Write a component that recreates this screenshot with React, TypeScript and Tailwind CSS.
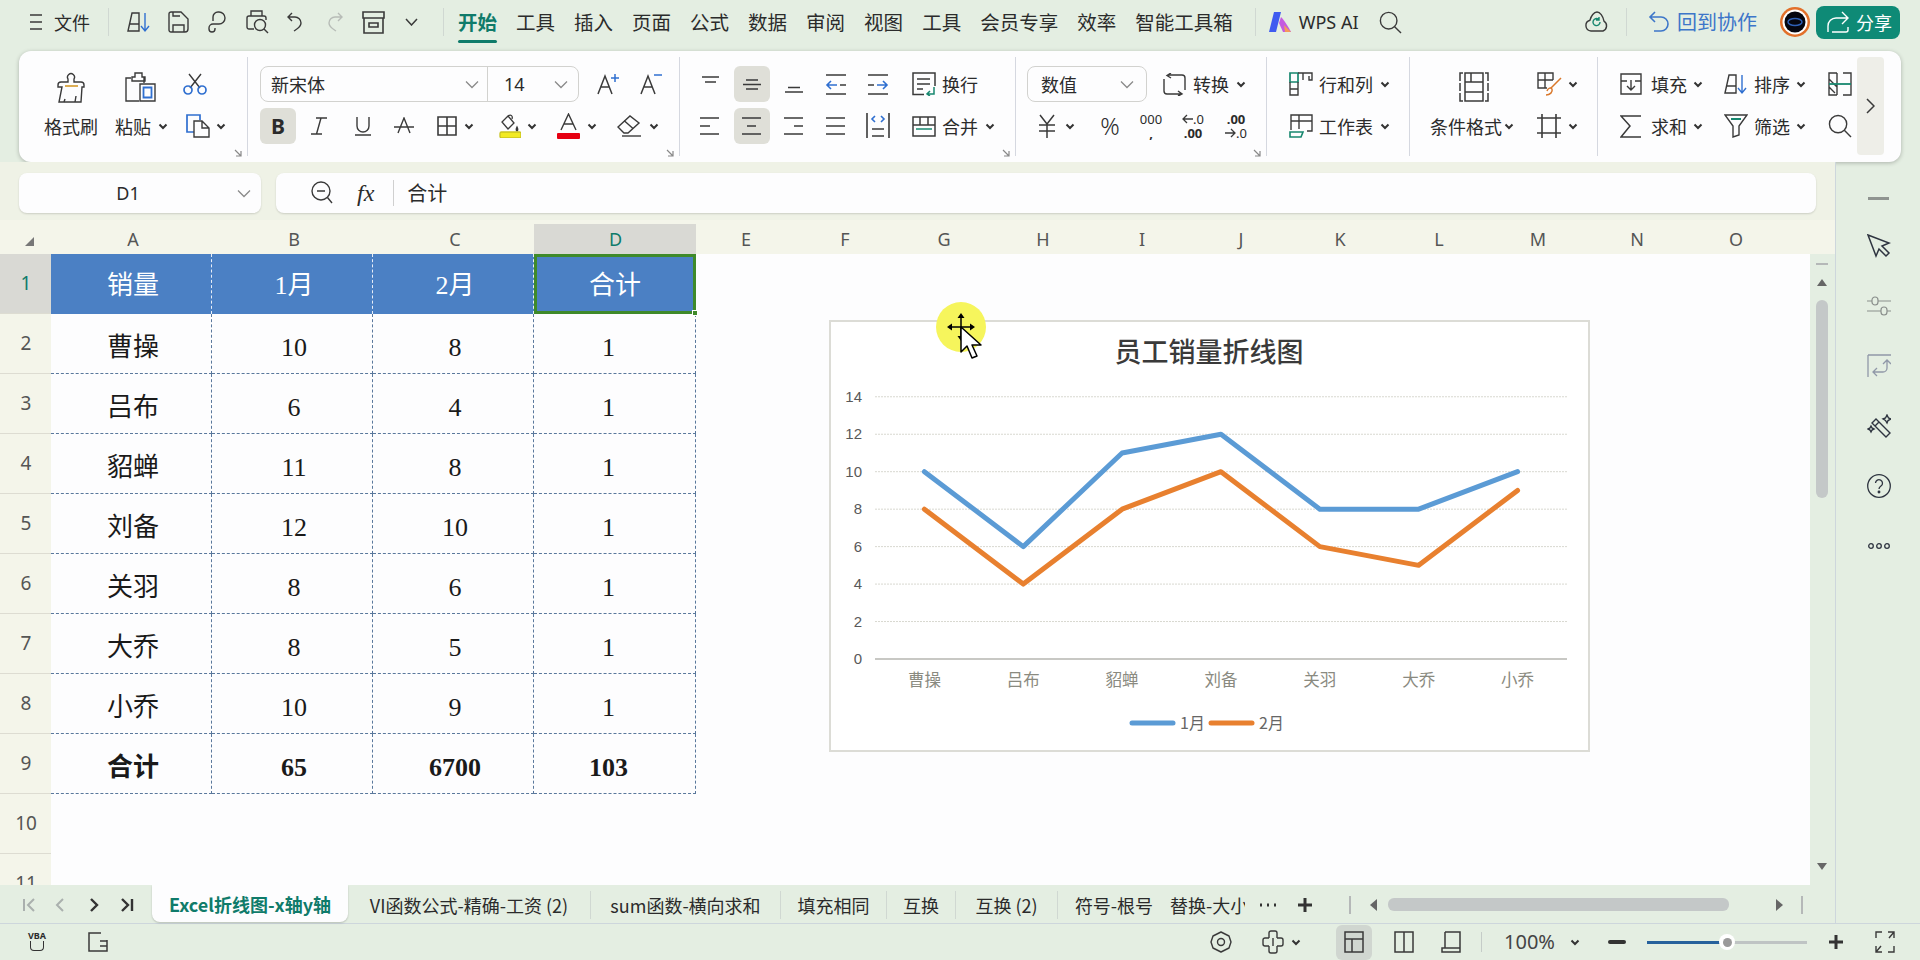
import React from 'react';

const INK = '#3a3a3a';
const BLUE = '#2f6fd0';
const GREEN = '#17876f';

type IconProps = { w: number; h: number; stroke?: string; sw?: number; children: React.ReactNode };

function Ico({ w, h, stroke = INK, sw = 1.4, children }: IconProps) {
  return (
    <svg width={w} height={h} viewBox={`0 0 ${w} ${h}`} fill="none" stroke={stroke} strokeWidth={sw} className="shrink-0 block">
      {children}
    </svg>
  );
}

function Chev() {
  return (
    <Ico w={10} h={7} sw={2} stroke="#333">
      <path d="M1.5 1.5 5 5l3.5-3.5" />
    </Ico>
  );
}

function ThinChev() {
  return (
    <Ico w={14} h={9} stroke="#8a8a8a" sw={1.3}>
      <path d="M1 1.5 7 7.5l6-6" />
    </Ico>
  );
}

function Launcher() {
  return (
    <div className="flex justify-end pr-[5px] mt-[5px] h-[8px]">
      <Ico w={8} h={8} stroke="#888" sw={1.2}>
        <path d="M1 1l6 6M7 2v5H2" />
      </Ico>
    </div>
  );
}

/* ---------- quick access icons ---------- */
const SortIcon = () => (
  <Ico w={24} h={22}>
    <path d="M1 20 5 2h7v18zM3 13h9" />
    <path d="M18 2v18M14 15l4 5 4-5" stroke={BLUE} />
  </Ico>
);
const SaveIcon = () => (
  <Ico w={21} h={22}>
    <path d="M1 3a2 2 0 0 1 2-2h10l7 7v10a3 3 0 0 1-3 3H3a2 2 0 0 1-2-2zM5 1v4h7M5 21v-7h11v7" />
  </Ico>
);
const PIcon = () => (
  <Ico w={20} h={22}>
    <path d="M6 10V6a5 5 0 0 1 5-5h1a6 6 0 0 1 0 12H6a4 4 0 0 0-4 4v1a3 3 0 0 0 6 0v-1" />
  </Ico>
);
const PreviewIcon = () => (
  <Ico w={23} h={24}>
    <path d="M5 6V1h11v5M8 19H3a2 2 0 0 1-2-2V8a2 2 0 0 1 2-2h15a2 2 0 0 1 2 2v2" />
    <circle cx="14" cy="15" r="5.5" />
    <path d="M18 19l4 4" />
  </Ico>
);
const UndoIcon = () => (
  <Ico w={16} h={20}>
    <path d="M5 1 1 5l4 4M1 5h7a6 6 0 0 1 6 6c0 4-4 6-7 8" />
  </Ico>
);
const RedoIcon = () => (
  <Ico w={16} h={20} stroke="#b7bcb7">
    <path d="M11 1l4 4-4 4M15 5H8a6 6 0 0 0-6 6c0 4 4 6 7 8" />
  </Ico>
);
const ArchiveIcon = () => (
  <Ico w={23} h={23} sw={1.6}>
    <path d="M1 1h21v6H1zM2 7v15h19V7M7 12h9v4H7z" />
  </Ico>
);
const SearchIcon = ({ s = 22 }: { s?: number }) => (
  <Ico w={s} h={s}>
    <circle cx={s * 0.42} cy={s * 0.42} r={s * 0.36} />
    <path d={`M${s * 0.68} ${s * 0.68}L${s - 1} ${s - 1}`} />
  </Ico>
);
const WpsLogo = () => (
  <svg width="24" height="22" viewBox="0 0 24 22" className="shrink-0 block">
    <path d="M5 1h7L7 21H0z" fill="#3f5bf0" />
    <path d="M10 12 12 6c3 3 7 9 10 15h-8z" fill="#c45ae0" />
    <path d="M15 14l7 7h-6z" fill="#f59a5a" />
  </svg>
);
const CloudIcon = () => (
  <Ico w={26} h={24}>
    <path d="M7 21a5.5 5.5 0 0 1-1-10.8C7 6 10 2 13 2s6 4 7 9.2A5.5 5.5 0 0 1 19 21z" />
    <path d="M16 12a3.5 3.5 0 1 1-1.5-2.8M15 7v3h-3" stroke={GREEN} />
  </Ico>
);
const BackIcon = () => (
  <Ico w={22} h={22} stroke="#3d76c9" sw={1.6}>
    <path d="M7 1 2 6l5 5M2 6h11a7 7 0 0 1 0 14H6" />
  </Ico>
);
const Avatar = () => (
  <svg width="30" height="30" viewBox="0 0 30 30" className="shrink-0 block">
    <circle cx="15" cy="15" r="15" fill="#e2702a" />
    <circle cx="15" cy="15" r="12.5" fill="#fff" />
    <circle cx="15" cy="15" r="10.5" fill="#05060f" />
    <ellipse cx="15" cy="15" rx="7" ry="3.5" fill="none" stroke="#2e5fb5" strokeWidth="1.5" />
  </svg>
);
const ShareIcon = () => (
  <Ico w={22} h={22} stroke="#fff" sw={1.4}>
    <path d="M1 21v-6a8 8 0 0 1 8-8h11M15 1l6 6-6 6M5 21h14a2 2 0 0 0 2-2v-3" />
  </Ico>
);

/* ---------- ribbon icons ---------- */
const BrushIcon = () => (
  <Ico w={30} h={31}>
    <path d="M12 10V7a3.5 3.5 0 1 1 6 0v3h7c2 0 3 1 3 3v2h-2l-1 15H3l3-15H2v-2c0-2 1-3 3-3z" />
    <path d="M9 14h13" stroke="#d9a441" strokeWidth="1.8" />
    <path d="M19 30l1-6M8 30l1-3" />
  </Ico>
);
const PasteIcon = () => (
  <Ico w={31} h={30}>
    <path d="M6 6H1v23h13M20 6h-1V11M7 9V5h3V1h7v4h3v4z" />
    <path d="M15 12h15v17H15z" />
    <path d="M18.5 15.5h8v10h-8z" stroke={BLUE} strokeWidth="1.8" />
  </Ico>
);
const ScissorsIcon = () => (
  <Ico w={24} h={22}>
    <path d="M6 1l11 14M18 1 7 15" />
    <circle cx="5" cy="17" r="4" stroke={BLUE} strokeWidth="1.7" />
    <circle cx="19" cy="17" r="4" stroke={BLUE} strokeWidth="1.7" />
  </Ico>
);
const CopyIcon = () => (
  <Ico w={24} h={24}>
    <path d="M8 18H1V1h13v5" stroke={BLUE} strokeWidth="1.7" />
    <path d="M8 7h8l7 7v9H8zM16 7v7h7" />
  </Ico>
);
const SmallA = ({ plus }: { plus: boolean }) => (
  <Ico w={22} h={24} sw={1.5}>
    <path d="M1 22 8 4l7 18M4 15h8" />
    <path d={plus ? 'M14 6h8M18 2v8' : 'M14 3h8'} stroke={BLUE} strokeWidth="1.5" />
  </Ico>
);
const ItalicIcon = () => (
  <Ico w={18} h={18}>
    <path d="M6 1h11M1 17h11M11 1 6.5 17" />
  </Ico>
);
const UnderlineIcon = () => (
  <Ico w={16} h={20}>
    <path d="M2 1v9a6 6 0 0 0 12 0V1M0 19h16" />
  </Ico>
);
const StrikeIcon = () => (
  <Ico w={20} h={18}>
    <path d="M4 16 10 1l6 15M0 10h20" />
  </Ico>
);
const BorderIcon = () => (
  <Ico w={20} h={20} sw={1.6}>
    <path d="M1 1h18v18H1zM1 10h18M10 1v18" />
  </Ico>
);
const FillIcon = () => (
  <svg width="22" height="24" viewBox="0 0 22 24" fill="none" stroke={INK} strokeWidth="1.3" className="shrink-0 block">
    <path d="M9 2 3 8l6 7 6-6zM9 2c3-2 5 0 4 3" />
    <path d="M18 13c1 2 1.5 3 0 4-1.500-1-1-2 0-4z" />
    <rect x="1" y="18" width="21" height="6" rx="1.5" fill="#f2ea23" stroke="#c9c421" />
  </svg>
);
const ColorAIcon = () => (
  <svg width="23" height="26" viewBox="0 0 23 26" fill="none" stroke={INK} strokeWidth="1.4" className="shrink-0 block">
    <path d="M4 17 11.5 1 19 17M7 11h9" />
    <rect x="0" y="20" width="23" height="6" rx="1" fill="#e60012" stroke="none" />
  </svg>
);
const EraserIcon = () => (
  <Ico w={24} h={22}>
    <path d="M1 12 13 1l9 7-11 10H7zM7 5.5l9 8" />
    <path d="M5 21h19" />
  </Ico>
);

/* alignment: drawn on the 36px button box */
const Lines = ({ d, extra }: { d: string; extra?: React.ReactNode }) => (
  <Ico w={36} h={36} sw={1.6}>
    <path d={d} />
    {extra}
  </Ico>
);

const WrapIcon = () => (
  <Ico w={24} h={24} sw={1.5}>
    <path d="M12 22.5H1V1h22v13M5 7h13M5 12h13M5 17h6" />
    <path d="M22 15v7h-7M18 19l-3 3 3 2" stroke={GREEN} />
  </Ico>
);
const MergeIcon = () => (
  <Ico w={24} h={21} sw={1.5}>
    <path d="M1 1h22v19H1zM1 9h22M8 1v8M16 1v8" />
    <path d="M4 13h16" stroke={GREEN} />
  </Ico>
);
const ConvertIcon = () => (
  <Ico w={23} h={23}>
    <path d="M22 17V5a3 3 0 0 0-3-3H5M8 0 4 2.5 8 5" />
    <path d="M1 6v12a3 3 0 0 0 3 3h15M15 18l4 3-4 2" />
  </Ico>
);
const YenIcon = () => (
  <Ico w={18} h={24} sw={1.5}>
    <path d="M2 1l7 9 7-9M9 10v14M1 11h16M1 17h16" />
  </Ico>
);
const LeftArrow = () => (
  <Ico w={11} h={10} sw={1.3}>
    <path d="M11 5H1M5 1 1 5l4 4" />
  </Ico>
);
const RightArrow = () => (
  <Ico w={11} h={10} sw={1.3}>
    <path d="M0 5h10M6 1l4 4-4 4" />
  </Ico>
);
const RowColIcon = () => (
  <Ico w={24} h={24}>
    <path d="M1 1h8v9H1z" stroke={GREEN} strokeWidth="1.7" />
    <path d="M9 1h14v7h-3V4M14 1v7M1 10v13h8V10M1 17h8" />
  </Ico>
);
const SheetIcon = () => (
  <Ico w={24} h={24}>
    <path d="M2 16V1h21v16h-5M2 7h21M10 1v14" />
    <path d="M1 18h13l-2 5H1z" stroke={GREEN} strokeWidth="1.6" />
  </Ico>
);
const CondIcon = () => (
  <Ico w={30} h={30} sw={1.5}>
    <path d="M6 1h18v9H6zM6 20h18v9H6zM6 10v10M24 10v10M12 1v9" />
    <path d="M4 1H1v8M1 11v8M1 21v8h3M26 1h3v8M29 11v8M29 21v8h-3" />
  </Ico>
);
const CellStyleIcon = () => (
  <svg width="25" height="24" viewBox="0 0 25 24" fill="none" stroke={INK} strokeWidth="1.4" className="shrink-0 block">
    <path d="M10 16H1V1h15v7M1 8h15M8 1v15" />
    <path d="M24 6 14 16M10 19c1-3 4-4 5-2 1 3-2 6-6 6" stroke="#d9772a" strokeWidth="1.5" />
  </svg>
);
const CrossIcon = () => (
  <Ico w={24} h={24} sw={1.6}>
    <path d="M5 0v24M19 0v24M0 4h24M0 19h24" />
  </Ico>
);
const FillDownIcon = () => (
  <Ico w={22} h={22}>
    <path d="M1 1h20v20H1zM1 8h6M15 8h6M11 7v10M7 13l4 4 4-4" />
  </Ico>
);
const SumIcon = () => (
  <Ico w={22} h={23} sw={1.5}>
    <path d="M21 1H1l9 10-9 11h20" />
  </Ico>
);
const FilterIcon = () => (
  <Ico w={24} h={24}>
    <path d="M1 1h22l-8 11v9l-6 2V12z" />
    <path d="M7 5h10" stroke={GREEN} strokeWidth="2" />
  </Ico>
);
const FreezeIcon = () => (
  <Ico w={24} h={24}>
    <path d="M9 1H1v22h8M15 1h8v22h-8M9 1v22M1 7l8 8M1 15l6 6" />
    <path d="M1 12h22" stroke={GREEN} strokeWidth="1.8" />
  </Ico>
);

/* ---------- sidebar + status ---------- */
const ArrowSideIcon = () => (
  <Ico w={24} h={24} stroke="#2e3440" sw={1.5}>
    <path d="M1 1l21 8-7 3 7 7-3 3-7-7-3 7z" />
  </Ico>
);
const SlidersIcon = () => (
  <Ico w={24} h={20} stroke="#8a8f8c" sw={1.2}>
    <path d="M0 5h5M11 5h13M0 15h14M20 15h4" />
    <rect x="5" y="1" width="6" height="8" rx="3" />
    <rect x="14" y="11" width="6" height="8" rx="3" />
  </Ico>
);
const LoopIcon = () => (
  <Ico w={24} h={24} stroke="#9098a8" sw={1.3}>
    <path d="M1 1h23M1 1v22M20 14V7M16 10l4-4 4 4M20 14a4 4 0 0 1-4 4H6M10 14l-4 4 4 4" />
  </Ico>
);
const WandIcon = () => (
  <Ico w={24} h={24} stroke="#2e3440" sw={1.4}>
    <path d="M9 5 5 9l14 14 4-4zM12 8l-4 4" />
    <path d="M20 1l1.5 3L24 5l-3 1.5L20 9l-1.5-2.5L16 5l2.5-1zM4 12l1 2 2 1-2 1-1 2-1-2-2-1 2-1z" />
  </Ico>
);
const HelpIcon = () => (
  <svg width="24" height="24" viewBox="0 0 24 24" fill="none" stroke="#2e3440" strokeWidth="1.3" className="shrink-0 block">
    <circle cx="12" cy="12" r="11.3" />
    <path d="M8.5 9a3.5 3.5 0 1 1 5.5 3c-1.3 1-2 1.5-2 3" />
    <circle cx="12" cy="18" r="0.8" fill="#2e3440" />
  </svg>
);
const DotsIcon = () => (
  <Ico w={24} h={8} stroke="#2e3440" sw={1.3}>
    <circle cx="4" cy="4" r="2.3" />
    <circle cx="12" cy="4" r="2.3" />
    <circle cx="20" cy="4" r="2.3" />
  </Ico>
);
const EyeIcon = () => (
  <Ico w={22} h={22}>
    <path d="M11 1 19 5 21 11 19 17 11 21 3 17 1 11 3 5z" strokeLinejoin="round" />
    <circle cx="11" cy="11" r="3.5" />
  </Ico>
);
const MoveIcon = () => (
  <Ico w={22} h={24}>
    <path d="M7 8V3a2 2 0 0 1 2-2h4a2 2 0 0 1 2 2v5M7 16v5a2 2 0 0 0 2 2h4a2 2 0 0 0 2-2v-5M7 8H3a2 2 0 0 0-2 2v4a2 2 0 0 0 2 2h4M15 8h4a2 2 0 0 1 2 2v4a2 2 0 0 1-2 2h-4M11 8v8" />
  </Ico>
);
const ViewGrid = () => (
  <Ico w={20} h={22} sw={1.5}>
    <path d="M1 1h18v20H1zM1 8h18M8 8v13" />
  </Ico>
);
const ViewSplit = () => (
  <Ico w={20} h={22} sw={1.5}>
    <path d="M1 1h18v20H1zM10 1v20" />
  </Ico>
);
const ViewPage = () => (
  <Ico w={20} h={22} sw={1.5}>
    <path d="M4 1h15v20H1v-4h18M4 1v16" />
  </Ico>
);
const FullIcon = () => (
  <Ico w={20} h={22}>
    <path d="M1 7V1h6M13 1h6v6M19 15v6h-6M7 21H1v-6M1 21l5-6M19 1l-5 6" />
  </Ico>
);
const PlusIcon = () => (
  <Ico w={16} h={16} stroke="#333" sw={3}>
    <path d="M8 1v14M1 8h14" />
  </Ico>
);

/* ---------- chart ---------- */
const seriesA = [10, 6, 11, 12, 8, 8, 10];
const seriesB = [8, 4, 8, 10, 6, 5, 9];
const cats = ['曹操', '吕布', '貂蝉', '刘备', '关羽', '大乔', '小乔'];
const yOf = (v: number) => 339 - v * 18.73;
const xOf = (i: number) => 95.4 + i * 98.86;
const pts = (s: number[]) => s.map((v, i) => `${xOf(i)},${yOf(v)}`).join(' ');

function Chart() {
  return (
    <svg width="757" height="428" viewBox="0 0 757 428" className="block" fontFamily="'Noto Sans CJK SC', sans-serif">
      <text x="378" y="40" textAnchor="middle" fontSize="27" fill="#3a3a3a" fontWeight="500">员工销量折线图</text>
      {[0, 2, 4, 6, 8, 10, 12, 14].map((v) => (
        <g key={v}>
          <line x1="44" x2="736" y1={yOf(v) - 2} y2={yOf(v) - 2} stroke={v === 0 ? '#c8c8c4' : '#d8d8d0'} strokeWidth={v === 0 ? 2 : 1} strokeDasharray={v === 0 ? undefined : '2 1'} />
          <text x="31" y={yOf(v) + 3} textAnchor="end" fontSize="15" fill="#595959" fontFamily="'Liberation Sans', sans-serif">{v}</text>
        </g>
      ))}
      <polyline points={pts(seriesA)} transform="translate(-2 -2)" fill="none" stroke="#5b9bd5" strokeWidth="5" strokeLinecap="round" strokeLinejoin="round" />
      <polyline points={pts(seriesB)} transform="translate(-2 -2)" fill="none" stroke="#e8802f" strokeWidth="5" strokeLinecap="round" strokeLinejoin="round" />
      {cats.map((c, i) => (
        <text key={c} x={xOf(i) - 2} y="364" textAnchor="middle" fontSize="16.5" fill="#8a8a80">{c}</text>
      ))}
      <line x1="301" x2="342" y1="401" y2="401" stroke="#5b9bd5" strokeWidth="5" strokeLinecap="round" />
      <text x="349" y="407" fontSize="16" fill="#666">1月</text>
      <line x1="380" x2="421" y1="401" y2="401" stroke="#e8802f" strokeWidth="5" strokeLinecap="round" />
      <text x="428" y="407" fontSize="16" fill="#666">2月</text>
    </svg>
  );
}

function CursorMark() {
  return (
    <svg width="50" height="60" viewBox="0 0 50 60" className="block">
      <circle cx="25" cy="25" r="25" fill="#f6f55c" />
      <path d="M25 14v22M14 25h22" stroke="#000" strokeWidth="1.5" />
      <path d="M25 11l-3.5 5h7zM25 39l-3.5-5h7zM11 25l5-3.5v7zM39 25l-5-3.5v7z" fill="#000" />
      <path d="M25 25v25l6-6 5 12 5-2-5-11h9z" fill="#fff" stroke="#000" strokeWidth="1.5" strokeLinejoin="round" />
    </svg>
  );
}

/* ---------- table data ---------- */
const columns = [
  { name: 'A', cls: 'w-[161px] pl-[3px]' },
  { name: 'B', cls: 'w-[161px] pl-[3px]' },
  { name: 'C', cls: 'w-[161px] pl-[3px]' },
  { name: 'D', cls: 'w-[162px] pl-[1px] bg-[#d9d9d4] text-[#0f7b6a]' },
  ...['E', 'F', 'G', 'H', 'I', 'J', 'K', 'L', 'M', 'N', 'O'].map((name) => ({ name, cls: 'w-[99px] pl-[1px]' })),
];

const rows = [
  ['曹操', '10', '8', '1'],
  ['吕布', '6', '4', '1'],
  ['貂蝉', '11', '8', '1'],
  ['刘备', '12', '10', '1'],
  ['关羽', '8', '6', '1'],
  ['大乔', '8', '5', '1'],
  ['小乔', '10', '9', '1'],
];

const tabs = [
  { name: 'VI函数公式-精确-工资 (2)', cls: 'w-[243px]' },
  { name: 'sum函数-横向求和', cls: 'w-[190px]' },
  { name: '填充相同', cls: 'w-[106px]' },
  { name: '互换', cls: 'w-[69px]' },
  { name: '互换 (2)', cls: 'w-[102px]' },
  { name: '符号-根号', cls: 'w-[112px]' },
];

function Group({ cls, children, launcher }: { cls: string; children: React.ReactNode; launcher?: boolean }) {
  return (
    <div className={`shrink-0 my-[6px] h-[99px] border-r border-[#d5d8e0] pt-[9px] ${cls}`}>
      {children}
      {launcher && <Launcher />}
    </div>
  );
}

const Row = ({ cls = '', children }: { cls?: string; children: React.ReactNode }) => (
  <div className={`flex items-center h-9 ${cls}`}>{children}</div>
);

const Box = ({ on, children }: { on?: boolean; children: React.ReactNode }) => (
  <div className={`w-9 h-9 shrink-0 flex items-center justify-center rounded-md ${on ? 'bg-[#dfdfd8]' : ''}`}>{children}</div>
);

export default function App() {
  return (
    <div className="w-[1920px] h-[960px] overflow-hidden flex flex-col bg-[#e4eee2] text-[18px] text-[#2b2b2b] font-['Noto_Sans_CJK_SC','Noto_Sans',sans-serif]">
      {/* Title bar */}
      <div className="h-[51px] shrink-0 flex items-center pb-[7px] pr-[20px] leading-[28px]">
        <div className="ml-[30px]">
          <Ico w={12} h={18} sw={1.6}>
            <path d="M0 2h12M0 9h12M0 16h12" />
          </Ico>
        </div>
        <span className="ml-[12px]">文件</span>
        <div className="ml-[18px] w-px h-[28px] bg-[#d0d8d2]" />
        <div className="ml-[18px]"><SortIcon /></div>
        <div className="ml-[17px]"><SaveIcon /></div>
        <div className="ml-[18px]"><PIcon /></div>
        <div className="ml-[19px]"><PreviewIcon /></div>
        <div className="ml-[18px]"><UndoIcon /></div>
        <div className="ml-[24px]"><RedoIcon /></div>
        <div className="ml-[19px]"><ArchiveIcon /></div>
        <div className="ml-[20px]">
          <Ico w={13} h={8} sw={1.5}>
            <path d="M1 1l5.5 6L12 1" />
          </Ico>
        </div>
        <div className="ml-[25px] w-px h-[28px] bg-[#d0d8d2]" />
        <div className="ml-[14px] flex gap-[19px] text-[19.5px]">
          <div className="relative font-bold text-[#0f7b6a]">
            开始
            <div className="absolute left-0 top-[32px] w-[39px] h-[3px] rounded bg-[#0f7b6a]" />
          </div>
          {['工具', '插入', '页面', '公式', '数据', '审阅', '视图', '工具', '会员专享', '效率', '智能工具箱'].map((t, i) => (
            <div key={i}>{t}</div>
          ))}
        </div>
        <div className="ml-[22px] w-px h-[28px] bg-[#d0d8d2]" />
        <div className="ml-[13px]"><WpsLogo /></div>
        <span className="ml-[6px] font-['Noto_Sans',sans-serif]">WPS AI</span>
        <div className="ml-[21px]"><SearchIcon s={23} /></div>
        <div className="flex-1" />
        <CloudIcon />
        <div className="ml-[16px] w-px h-[28px] bg-[#d0d8d2]" />
        <div className="ml-[21px]"><BackIcon /></div>
        <span className="ml-[7px] text-[20px] text-[#3d76c9]">回到协作</span>
        <div className="ml-[23px]"><Avatar /></div>
        <div className="ml-[6px] w-[84px] h-[33px] rounded-lg bg-[#0e8a76] flex items-center pl-[11px] gap-[7px] text-white">
          <ShareIcon />
          <span>分享</span>
        </div>
      </div>

      {/* Ribbon */}
      <div className="mx-[19px] w-[1882px] h-[111px] shrink-0 bg-[#fdfdfe] rounded-xl shadow-[0_1px_4px_rgba(0,0,0,0.25)] flex leading-none">
        <Group cls="w-[229px]" launcher>
          <div className="flex h-[78px]">
            <div className="ml-[17px] w-[70px] flex flex-col">
              <Row cls="justify-center mt-[3px]"><BrushIcon /></Row>
              <Row cls="justify-center mt-[3px]">格式刷</Row>
            </div>
            <div className="w-[66px] flex flex-col">
              <Row cls="pl-[19px] mt-[3px]"><PasteIcon /></Row>
              <Row cls="pl-[9px] gap-[7px] mt-[3px]">粘贴<Chev /></Row>
            </div>
            <div className="flex flex-col">
              <Row cls="pl-[11px]"><ScissorsIcon /></Row>
              <Row cls="pl-[14px] gap-[6px] mt-[6px]"><CopyIcon /><Chev /></Row>
            </div>
          </div>
        </Group>

        <Group cls="w-[432px] pl-[12px]" launcher>
          <Row>
            <div className="w-[319px] h-9 border border-[#d2d2cf] rounded-lg flex items-center">
              <div className="w-[227px] h-full pl-[10px] pr-[8px] flex items-center justify-between border-r border-[#d2d2cf]">
                新宋体
                <ThinChev />
              </div>
              <div className="flex-1 pl-[16px] pr-[10px] flex items-center justify-between font-['Noto_Sans',sans-serif]">
                14
                <ThinChev />
              </div>
            </div>
            <div className="ml-[18px]"><SmallA plus /></div>
            <div className="ml-[21px]"><SmallA plus={false} /></div>
          </Row>
          <Row cls="mt-[6px]">
            <Box on><span className="text-[21px] font-bold font-['Noto_Sans',sans-serif]">B</span></Box>
            <div className="ml-[14px]"><ItalicIcon /></div>
            <div className="ml-[27px]"><UnderlineIcon /></div>
            <div className="ml-[23px]"><StrikeIcon /></div>
            <div className="ml-[23px]"><BorderIcon /></div>
            <div className="ml-[7px]"><Chev /></div>
            <div className="ml-[25px]"><FillIcon /></div>
            <div className="ml-[6px]"><Chev /></div>
            <div className="ml-[20px]"><ColorAIcon /></div>
            <div className="ml-[7px]"><Chev /></div>
            <div className="ml-[20px]"><EraserIcon /></div>
            <div className="ml-[8px]"><Chev /></div>
          </Row>
        </Group>

        <Group cls="w-[336px] pl-[12px]" launcher>
          <Row cls="gap-[6px]">
            <Box><Lines d="M10 11h17M13 16h11" /></Box>
            <Box on><Lines d="M12 14h12M9 18.5h18M12 23h12" /></Box>
            <Box><Lines d="M12 21.5h12M9 26h18" /></Box>
            <Box>
              <Lines d="M8 9h20M8 28h20M22 19h6" extra={<path d="M19 19H9M13 15l-4 4 4 4" stroke={BLUE} />} />
            </Box>
            <Box>
              <Lines d="M8 9h20M8 28h20M8 19h6" extra={<path d="M17 19h10M23 15l4 4-4 4" stroke={BLUE} />} />
            </Box>
            <div className="ml-[10px]"><WrapIcon /></div>
            <span>换行</span>
          </Row>
          <Row cls="gap-[6px] mt-[6px]">
            <Box><Lines d="M8 10h19M8 18h10M8 26h19" /></Box>
            <Box on><Lines d="M8 10h19M13 18h9M8 26h19" /></Box>
            <Box><Lines d="M8 10h19M18 18h9M8 26h19" /></Box>
            <Box><Lines d="M8 10h19M8 18h19M8 26h19" /></Box>
            <Box>
              <Lines d="M7 5v25M29 5v25M12 21h12M12 28h12" extra={<path d="M15 8l-3 3 3 3M21 8l3 3-3 3" stroke={BLUE} />} />
            </Box>
            <div className="ml-[10px]"><MergeIcon /></div>
            <span>合并</span>
            <div className="ml-[1px]"><Chev /></div>
          </Row>
        </Group>

        <Group cls="w-[251px] pl-[11px]" launcher>
          <Row>
            <div className="w-[120px] h-9 border border-[#d2d2cf] rounded-lg flex items-center justify-between pl-[13px] pr-[12px]">
              数值
              <ThinChev />
            </div>
            <div className="ml-[16px]"><ConvertIcon /></div>
            <span className="ml-[7px]">转换</span>
            <div className="ml-[7px]"><Chev /></div>
          </Row>
          <Row cls="mt-[6px]">
            <div className="ml-[11px]"><YenIcon /></div>
            <div className="ml-[9px]"><Chev /></div>
            <span className="ml-[24px] w-[22px] text-center text-[24px] font-light font-['Noto_Sans',sans-serif]">%</span>
            <div className="ml-[18px] w-[24px] flex flex-col items-center text-[13px] leading-[14px] font-['Noto_Sans',sans-serif]">
              <span>000</span>
              <span className="font-bold">,</span>
            </div>
            <div className="ml-[17px] w-[26px] flex flex-col items-center text-[13px] leading-[14px] font-['Noto_Sans',sans-serif]">
              <div className="flex items-center"><LeftArrow /><span>.0</span></div>
              <span className="font-bold">.00</span>
            </div>
            <div className="ml-[17px] w-[26px] flex flex-col items-center text-[13px] leading-[14px] font-['Noto_Sans',sans-serif]">
              <span className="font-bold">.00</span>
              <div className="flex items-center"><RightArrow /><span>.0</span></div>
            </div>
          </Row>
        </Group>

        <Group cls="w-[143px]">
          <Row cls="pl-[22px]">
            <RowColIcon />
            <span className="ml-[6px]">行和列</span>
            <div className="ml-[7px]"><Chev /></div>
          </Row>
          <Row cls="pl-[22px] mt-[6px]">
            <SheetIcon />
            <span className="ml-[6px]">工作表</span>
            <div className="ml-[7px]"><Chev /></div>
          </Row>
        </Group>

        <Group cls="w-[188px] flex">
          <div className="w-[127px] flex flex-col">
            <Row cls="pl-[49px] mt-[3px]"><CondIcon /></Row>
            <Row cls="pl-[20px] gap-[2px] mt-[3px]">条件格式<Chev /></Row>
          </div>
          <div className="flex flex-col">
            <Row><CellStyleIcon /><div className="ml-[6px]"><Chev /></div></Row>
            <Row cls="mt-[6px]"><CrossIcon /><div className="ml-[7px]"><Chev /></div></Row>
          </div>
        </Group>

        <div className="flex-1 flex my-[6px] pt-[9px]">
          <div className="flex flex-col">
            <Row cls="pl-[22px]">
              <FillDownIcon />
              <span className="ml-[9px]">填充</span>
              <div className="ml-[6px]"><Chev /></div>
            </Row>
            <Row cls="pl-[22px] mt-[6px]">
              <SumIcon />
              <span className="ml-[9px]">求和</span>
              <div className="ml-[6px]"><Chev /></div>
            </Row>
          </div>
          <div className="flex flex-col">
            <Row cls="pl-[21px]">
              <SortIcon />
              <span className="ml-[6px]">排序</span>
              <div className="ml-[6px]"><Chev /></div>
            </Row>
            <Row cls="pl-[21px] mt-[6px]">
              <FilterIcon />
              <span className="ml-[6px]">筛选</span>
              <div className="ml-[6px]"><Chev /></div>
            </Row>
          </div>
          <div className="flex flex-col pl-[22px]">
            <Row><FreezeIcon /></Row>
            <Row cls="mt-[6px]"><SearchIcon s={24} /></Row>
          </div>
          <div className="ml-[5px] -mt-[9px] w-[27px] h-[98px] bg-[#eeeee8] rounded flex items-center justify-center">
            <Ico w={9} h={16} sw={1.5}>
              <path d="M1 1l7 7-7 7" />
            </Ico>
          </div>
        </div>
      </div>

      {/* Middle: sheet + side panel */}
      <div className="h-[762px] shrink-0 flex border-b border-[#cdd6dc]">
        <div className="w-[1835px] shrink-0 flex flex-col">
          {/* Formula bar */}
          <div className="h-[58px] shrink-0 pt-[11px] pl-[19px] flex bg-[#eff2e6]">
            <div className="w-[242px] h-[40px] bg-[#fdfdfe] rounded-lg shadow-[0_1px_2px_rgba(0,0,0,0.15)] flex items-center pr-[10px]">
              <span className="flex-1 text-center font-['Noto_Sans',sans-serif]">D1</span>
              <ThinChev />
            </div>
            <div className="ml-[15px] w-[1540px] h-[40px] bg-[#fdfdfe] rounded-lg shadow-[0_1px_2px_rgba(0,0,0,0.15)] flex items-center">
              <div className="ml-[35px]">
                <Ico w={22} h={24}>
                  <circle cx="10" cy="10" r="9" />
                  <path d="M6 10h8M16.5 16.5 21 22" />
                </Ico>
              </div>
              <span className="ml-[24px] italic text-[24px] font-['Liberation_Serif',serif]">fx</span>
              <div className="ml-[19px] w-px h-[26px] bg-[#d0d0d0]" />
              <span className="ml-[13px] text-[20px]">合计</span>
            </div>
          </div>

          {/* Column headers */}
          <div className="h-[34px] shrink-0 flex bg-[#f4f5ea] text-[#555] text-[18px] font-['Noto_Sans',sans-serif] pt-[4px]">
            <div className="w-[51px] shrink-0 flex items-end justify-end pr-[17px] pb-[8px]">
              <div className="w-0 h-0 border-l-[9px] border-l-transparent border-b-[9px] border-b-[#777]" />
            </div>
            {columns.map((c) => (
              <div key={c.name} className={`shrink-0 flex items-center justify-center ${c.cls}`}>{c.name}</div>
            ))}
          </div>

          {/* Sheet */}
          <div className="h-[631px] shrink-0 flex">
            <div className="w-[51px] shrink-0 h-full overflow-hidden bg-[#f4f5ea] text-[#555] text-[19px] font-['Noto_Sans',sans-serif]">
              {[1, 2, 3, 4, 5, 6, 7, 8, 9, 10, 11].map((n) => (
                <div key={n} className={`h-[60px] flex items-center justify-center pl-[1px] border-b border-[#dddcd2] ${n === 1 ? 'bg-[#d9d9d4] text-[#0f7b6a]' : ''}`}>
                  {n}
                </div>
              ))}
            </div>

            <div className="relative w-[1759px] shrink-0 h-full bg-[#fdfdfe] overflow-hidden">
              <div className="grid grid-cols-[161px_161px_161px_162px] auto-rows-[60px] w-[645px] text-[26px] text-[#1a1a1a] font-['Liberation_Serif','Noto_Sans_CJK_SC',serif]">
                {['销量', '1月', '2月'].map((h) => (
                  <div key={h} className="bg-[#4b80c4] text-white flex items-center justify-center pl-[4px] pt-[3px] border-r border-dashed border-r-[#e8eef8]">{h}</div>
                ))}
                <div className="relative bg-[#4b80c4] text-white flex items-center justify-center pt-[2px] border-[3px] border-[#3f8a2a]">
                  合计
                  <div className="absolute -right-[5px] -bottom-[5px] w-[6px] h-[6px] bg-[#3f8a2a] border border-white" />
                </div>
                {rows.map((r) =>
                  r.map((v, i) => (
                    <div
                      key={r[0] + i}
                      className={`flex items-center justify-center pt-[7px] border-b border-r border-dashed border-[#5a789c] ${i === 3 ? 'pr-[12px]' : 'pl-[4px]'}`}
                    >
                      {v}
                    </div>
                  )),
                )}
                {['合计', '65', '6700', '103'].map((v, i) => (
                  <div key={v} className={`font-bold flex items-center justify-center pt-[7px] border-b border-r border-dashed border-[#5a789c] ${i === 3 ? 'pr-[12px]' : 'pl-[4px]'}`}>
                    {v}
                  </div>
                ))}
              </div>

              {/* floating chart */}
              <div className="absolute left-[778px] top-[66px] w-[761px] h-[432px] bg-white border-2 border-[#dcdcd6]">
                <Chart />
              </div>
              <div className="absolute left-[885px] top-[48px]">
                <CursorMark />
              </div>
            </div>

            {/* Vertical scrollbar */}
            <div className="flex-1 flex flex-col items-center pr-[1px]">
              <div className="mt-[9px] w-[12px] h-[2px] bg-[#b5b8b8]" />
              <div className="mt-[14px] w-0 h-0 border-l-[5px] border-r-[5px] border-b-[7px] border-l-transparent border-r-transparent border-b-[#666]" />
              <div className="mt-[14px] w-[12px] h-[198px] rounded-md bg-[#c4c8c8]" />
              <div className="mt-[365px] w-0 h-0 border-l-[5px] border-r-[5px] border-t-[7px] border-l-transparent border-r-transparent border-t-[#666]" />
            </div>
          </div>

          {/* Sheet tabs */}
          <div className="flex-1 flex items-start leading-none">
            <div className="w-[152px] shrink-0 h-[39px] flex items-center pl-[22px]">
              <Ico w={14} h={14} stroke="#aab0ae" sw={2}>
                <path d="M2 1v12M12 1 6 7l6 6" />
              </Ico>
              <div className="ml-[19px]">
                <Ico w={9} h={14} stroke="#aab0ae" sw={2}>
                  <path d="M8 1 2 7l6 6" />
                </Ico>
              </div>
              <div className="ml-[26px]">
                <Ico w={9} h={14} stroke="#333" sw={2.4}>
                  <path d="M1 1l6 6-6 6" />
                </Ico>
              </div>
              <div className="ml-[21px]">
                <Ico w={14} h={14} stroke="#333" sw={2.4}>
                  <path d="M2 1l6 6-6 6M12 1v12" />
                </Ico>
              </div>
            </div>
            <div className="w-[196px] shrink-0 h-[37px] bg-[#fdfdfe] rounded-b-lg shadow-[0_1px_2px_rgba(0,0,0,0.2)] flex items-center justify-center font-bold text-[#0f7b6a] text-[18px]">
              Excel折线图-x轴y轴
            </div>
            {tabs.map((t, i) => (
              <div key={t.name} className={`shrink-0 h-[39px] flex items-center justify-center ${t.cls}`}>
                <span className={`flex-1 text-center whitespace-nowrap ${i < 5 ? 'border-r border-[#d0d8d2]' : ''} leading-[28px]`}>{t.name}</span>
              </div>
            ))}
            <div className="w-[75px] shrink-0 h-[39px] flex items-center overflow-hidden whitespace-nowrap">替换-大小写</div>
            <div className="ml-[14px] h-[39px] flex items-center">
              <Ico w={18} h={4} stroke="#333" sw={3}>
                <path d="M1 2h2M8 2h2M15 2h2" />
              </Ico>
            </div>
            <div className="ml-[20px] h-[39px] flex items-center"><PlusIcon /></div>
            <div className="ml-[36px] h-[39px] flex items-center">
              <div className="w-[2px] h-[18px] bg-[#b5b8b8]" />
              <div className="ml-[19px] w-0 h-0 border-t-[6px] border-b-[6px] border-r-[7px] border-t-transparent border-b-transparent border-r-[#666]" />
              <div className="ml-[11px] w-[341px] h-[13px] rounded-md bg-[#c4c8c8]" />
              <div className="ml-[47px] w-0 h-0 border-t-[6px] border-b-[6px] border-l-[7px] border-t-transparent border-b-transparent border-l-[#666]" />
              <div className="ml-[18px] w-[2px] h-[18px] bg-[#b5b8b8]" />
            </div>
          </div>
        </div>

        {/* Side panel */}
        <div className="flex-1 border-l border-[#cdd6dc] pt-[6px] flex flex-col items-center pl-[1px]">
          <div className="h-[60px] flex items-center"><div className="w-[21px] h-[3px] bg-[#8f9490]" /></div>
          <div className="h-[36px] flex items-center"><ArrowSideIcon /></div>
          <div className="mt-[12px] h-[60px] flex items-center"><SlidersIcon /></div>
          <div className="h-[60px] flex items-center"><LoopIcon /></div>
          <div className="h-[60px] flex items-center"><WandIcon /></div>
          <div className="h-[60px] flex items-center"><HelpIcon /></div>
          <div className="h-[60px] flex items-center"><DotsIcon /></div>
        </div>
      </div>

      {/* Status bar */}
      <div className="flex-1 flex items-center">
        <div className="ml-[27px] flex flex-col items-center w-[20px] h-[22px] text-[9px] leading-[10px] font-bold font-['Noto_Sans',sans-serif]">
          <span>VBA</span>
          <div className="w-[14px] h-[10px] border-[1.5px] border-t-0 border-[#333] rounded-b" />
        </div>
        <div className="ml-[41px]">
          <Ico w={20} h={20} sw={1.5}>
            <path d="M13 1H1v18h18V8M1 1h12M12 9h7M12 14h7" />
          </Ico>
        </div>
        <div className="flex-1" />
        <EyeIcon />
        <div className="ml-[30px]"><MoveIcon /></div>
        <div className="ml-[7px]"><Chev /></div>
        <div className="ml-[35px] w-[36px] h-[35px] rounded-md bg-[#d0d6d0] flex items-center justify-center"><ViewGrid /></div>
        <div className="ml-[22px]"><ViewSplit /></div>
        <div className="ml-[27px]"><ViewPage /></div>
        <div className="ml-[20px] w-px h-[20px] bg-[#c5ccc8]" />
        <span className="ml-[22px] text-[20px] text-[#444] font-['Noto_Sans',sans-serif]">100%</span>
        <div className="ml-[15px]"><Chev /></div>
        <div className="ml-[28px] w-[18px] h-[4px] rounded bg-[#333]" />
        <div className="ml-[21px] w-[160px] h-[3px] bg-[#bfc4c4] flex items-center">
          <div className="w-[80px] h-[3px] bg-[#26619c]" />
          <div className="w-[16px] h-[16px] -ml-[8px] rounded-full bg-white flex items-center justify-center">
            <div className="w-[9px] h-[9px] rounded-full bg-[#9a9a9a]" />
          </div>
        </div>
        <div className="ml-[21px]"><PlusIcon /></div>
        <div className="ml-[31px] mr-[25px]"><FullIcon /></div>
      </div>
    </div>
  );
}
